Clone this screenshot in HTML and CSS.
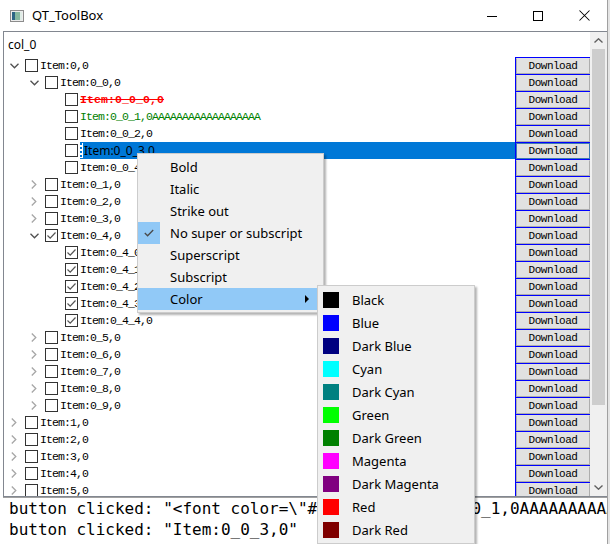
FILE: index.html
```html
<!DOCTYPE html>
<html>
<head>
<meta charset="utf-8">
<link rel="stylesheet" href="styles.css">
</head>
<body>
<div class="window">
  <div class="titlebar">
    <svg class="app-icon" width="14" height="12" viewBox="0 0 14 12"><rect x="0.5" y="0.5" width="13" height="11" fill="#ececec" stroke="#8c8c8c"/><rect x="2" y="2" width="3" height="8" fill="#2c6585"/><rect x="5" y="2" width="5" height="8" fill="#86b8a0"/><rect x="10" y="2" width="2" height="8" fill="#dfece6"/></svg>
    <span class="title">QT_ToolBox</span>
    <div class="controls">
      <div class="ctl"><svg width="10" height="10" viewBox="0 0 10 10"><line x1="0" y1="5.5" x2="10" y2="5.5" stroke="#000" stroke-width="1"/></svg></div>
      <div class="ctl"><svg width="10" height="10" viewBox="0 0 10 10"><rect x="0.5" y="0.5" width="9" height="9" fill="none" stroke="#000" stroke-width="1"/></svg></div>
      <div class="ctl"><svg width="11" height="11" viewBox="0 0 11 11"><path d="M0.5 0.5 L10.5 10.5 M10.5 0.5 L0.5 10.5" stroke="#000" stroke-width="1.05" fill="none"/></svg></div>
    </div>
  </div>
  <div class="client">
    <div class="tree">
      <div class="viewport">
        <div class="header">col_0</div>
        <div class="rows">
          <div class="row"><div class="node l0"><span class="arr"><svg width="9" height="6" viewBox="0 0 9 6"><polyline points="0.5,0.8 4.5,4.8 8.5,0.8" fill="none" stroke="#505050" stroke-width="1.3"/></svg></span><span class="cb"></span><span class="lbl">Item:0,0</span></div><div class="dl"><div class="dl-btn">Download</div></div></div>
          <div class="row"><div class="node l1"><span class="arr"><svg width="9" height="6" viewBox="0 0 9 6"><polyline points="0.5,0.8 4.5,4.8 8.5,0.8" fill="none" stroke="#505050" stroke-width="1.3"/></svg></span><span class="cb"></span><span class="lbl">Item:0_0,0</span></div><div class="dl"><div class="dl-btn">Download</div></div></div>
          <div class="row"><div class="node l2"><span class="arr"></span><span class="cb"></span><span class="lbl red">Item:0_0_0,0</span></div><div class="dl"><div class="dl-btn">Download</div></div></div>
          <div class="row"><div class="node l2"><span class="arr"></span><span class="cb"></span><span class="lbl green">Item:0_0_1,0AAAAAAAAAAAAAAAAAA</span></div><div class="dl"><div class="dl-btn">Download</div></div></div>
          <div class="row"><div class="node l2"><span class="arr"></span><span class="cb"></span><span class="lbl">Item:0_0_2,0</span></div><div class="dl"><div class="dl-btn">Download</div></div></div>
          <div class="row"><div class="node l2"><span class="arr"></span><span class="cb"></span><div class="edit"><span class="caret"></span><span class="edit-text">Item:0_0_3,0</span></div></div><div class="dl sel"><div class="dl-btn">Download</div></div></div>
          <div class="row"><div class="node l2"><span class="arr"></span><span class="cb"></span><span class="lbl">Item:0_0_4,0</span></div><div class="dl"><div class="dl-btn">Download</div></div></div>
          <div class="row"><div class="node l1"><span class="arr"><svg width="6" height="9" viewBox="0 0 6 9"><polyline points="0.8,0.5 4.8,4.5 0.8,8.5" fill="none" stroke="#a6a6a6" stroke-width="1.3"/></svg></span><span class="cb"></span><span class="lbl">Item:0_1,0</span></div><div class="dl"><div class="dl-btn">Download</div></div></div>
          <div class="row"><div class="node l1"><span class="arr"><svg width="6" height="9" viewBox="0 0 6 9"><polyline points="0.8,0.5 4.8,4.5 0.8,8.5" fill="none" stroke="#a6a6a6" stroke-width="1.3"/></svg></span><span class="cb"></span><span class="lbl">Item:0_2,0</span></div><div class="dl"><div class="dl-btn">Download</div></div></div>
          <div class="row"><div class="node l1"><span class="arr"><svg width="6" height="9" viewBox="0 0 6 9"><polyline points="0.8,0.5 4.8,4.5 0.8,8.5" fill="none" stroke="#a6a6a6" stroke-width="1.3"/></svg></span><span class="cb"></span><span class="lbl">Item:0_3,0</span></div><div class="dl"><div class="dl-btn">Download</div></div></div>
          <div class="row"><div class="node l1"><span class="arr"><svg width="9" height="6" viewBox="0 0 9 6"><polyline points="0.5,0.8 4.5,4.8 8.5,0.8" fill="none" stroke="#505050" stroke-width="1.3"/></svg></span><span class="cb"><svg width="11" height="11" viewBox="0 0 11 11"><polyline points="1.5,5.5 4.2,8.2 9.5,2.5" fill="none" stroke="#555" stroke-width="1.2"/></svg></span><span class="lbl">Item:0_4,0</span></div><div class="dl"><div class="dl-btn">Download</div></div></div>
          <div class="row"><div class="node l2"><span class="arr"></span><span class="cb"><svg width="11" height="11" viewBox="0 0 11 11"><polyline points="1.5,5.5 4.2,8.2 9.5,2.5" fill="none" stroke="#555" stroke-width="1.2"/></svg></span><span class="lbl">Item:0_4_0,0</span></div><div class="dl"><div class="dl-btn">Download</div></div></div>
          <div class="row"><div class="node l2"><span class="arr"></span><span class="cb"><svg width="11" height="11" viewBox="0 0 11 11"><polyline points="1.5,5.5 4.2,8.2 9.5,2.5" fill="none" stroke="#555" stroke-width="1.2"/></svg></span><span class="lbl">Item:0_4_1,0</span></div><div class="dl"><div class="dl-btn">Download</div></div></div>
          <div class="row"><div class="node l2"><span class="arr"></span><span class="cb"><svg width="11" height="11" viewBox="0 0 11 11"><polyline points="1.5,5.5 4.2,8.2 9.5,2.5" fill="none" stroke="#555" stroke-width="1.2"/></svg></span><span class="lbl">Item:0_4_2,0</span></div><div class="dl"><div class="dl-btn">Download</div></div></div>
          <div class="row"><div class="node l2"><span class="arr"></span><span class="cb"><svg width="11" height="11" viewBox="0 0 11 11"><polyline points="1.5,5.5 4.2,8.2 9.5,2.5" fill="none" stroke="#555" stroke-width="1.2"/></svg></span><span class="lbl">Item:0_4_3,0</span></div><div class="dl"><div class="dl-btn">Download</div></div></div>
          <div class="row"><div class="node l2"><span class="arr"></span><span class="cb"><svg width="11" height="11" viewBox="0 0 11 11"><polyline points="1.5,5.5 4.2,8.2 9.5,2.5" fill="none" stroke="#555" stroke-width="1.2"/></svg></span><span class="lbl">Item:0_4_4,0</span></div><div class="dl"><div class="dl-btn">Download</div></div></div>
          <div class="row"><div class="node l1"><span class="arr"><svg width="6" height="9" viewBox="0 0 6 9"><polyline points="0.8,0.5 4.8,4.5 0.8,8.5" fill="none" stroke="#a6a6a6" stroke-width="1.3"/></svg></span><span class="cb"></span><span class="lbl">Item:0_5,0</span></div><div class="dl"><div class="dl-btn">Download</div></div></div>
          <div class="row"><div class="node l1"><span class="arr"><svg width="6" height="9" viewBox="0 0 6 9"><polyline points="0.8,0.5 4.8,4.5 0.8,8.5" fill="none" stroke="#a6a6a6" stroke-width="1.3"/></svg></span><span class="cb"></span><span class="lbl">Item:0_6,0</span></div><div class="dl"><div class="dl-btn">Download</div></div></div>
          <div class="row"><div class="node l1"><span class="arr"><svg width="6" height="9" viewBox="0 0 6 9"><polyline points="0.8,0.5 4.8,4.5 0.8,8.5" fill="none" stroke="#a6a6a6" stroke-width="1.3"/></svg></span><span class="cb"></span><span class="lbl">Item:0_7,0</span></div><div class="dl"><div class="dl-btn">Download</div></div></div>
          <div class="row"><div class="node l1"><span class="arr"><svg width="6" height="9" viewBox="0 0 6 9"><polyline points="0.8,0.5 4.8,4.5 0.8,8.5" fill="none" stroke="#a6a6a6" stroke-width="1.3"/></svg></span><span class="cb"></span><span class="lbl">Item:0_8,0</span></div><div class="dl"><div class="dl-btn">Download</div></div></div>
          <div class="row"><div class="node l1"><span class="arr"><svg width="6" height="9" viewBox="0 0 6 9"><polyline points="0.8,0.5 4.8,4.5 0.8,8.5" fill="none" stroke="#a6a6a6" stroke-width="1.3"/></svg></span><span class="cb"></span><span class="lbl">Item:0_9,0</span></div><div class="dl"><div class="dl-btn">Download</div></div></div>
          <div class="row"><div class="node l0"><span class="arr"><svg width="6" height="9" viewBox="0 0 6 9"><polyline points="0.8,0.5 4.8,4.5 0.8,8.5" fill="none" stroke="#a6a6a6" stroke-width="1.3"/></svg></span><span class="cb"></span><span class="lbl">Item:1,0</span></div><div class="dl"><div class="dl-btn">Download</div></div></div>
          <div class="row"><div class="node l0"><span class="arr"><svg width="6" height="9" viewBox="0 0 6 9"><polyline points="0.8,0.5 4.8,4.5 0.8,8.5" fill="none" stroke="#a6a6a6" stroke-width="1.3"/></svg></span><span class="cb"></span><span class="lbl">Item:2,0</span></div><div class="dl"><div class="dl-btn">Download</div></div></div>
          <div class="row"><div class="node l0"><span class="arr"><svg width="6" height="9" viewBox="0 0 6 9"><polyline points="0.8,0.5 4.8,4.5 0.8,8.5" fill="none" stroke="#a6a6a6" stroke-width="1.3"/></svg></span><span class="cb"></span><span class="lbl">Item:3,0</span></div><div class="dl"><div class="dl-btn">Download</div></div></div>
          <div class="row"><div class="node l0"><span class="arr"><svg width="6" height="9" viewBox="0 0 6 9"><polyline points="0.8,0.5 4.8,4.5 0.8,8.5" fill="none" stroke="#a6a6a6" stroke-width="1.3"/></svg></span><span class="cb"></span><span class="lbl">Item:4,0</span></div><div class="dl"><div class="dl-btn">Download</div></div></div>
          <div class="row"><div class="node l0"><span class="arr"><svg width="6" height="9" viewBox="0 0 6 9"><polyline points="0.8,0.5 4.8,4.5 0.8,8.5" fill="none" stroke="#a6a6a6" stroke-width="1.3"/></svg></span><span class="cb"></span><span class="lbl">Item:5,0</span></div><div class="dl"><div class="dl-btn">Download</div></div></div>
        </div>
      </div>
      <div class="vscroll">
        <div class="sb-btn"><svg width="9" height="5" viewBox="0 0 9 5"><polyline points="0.5,4.5 4.5,0.8 8.5,4.5" fill="none" stroke="#606060" stroke-width="1.4"/></svg></div>
        <div class="thumb"></div>
        <div class="sb-track"></div>
        <div class="sb-btn"><svg width="9" height="5" viewBox="0 0 9 5"><polyline points="0.5,0.5 4.5,4.2 8.5,0.5" fill="none" stroke="#606060" stroke-width="1.4"/></svg></div>
      </div>
    </div>
    <div class="log">
      <div class="log-line">button clicked: "&lt;font color=\"#008000\"&gt;Item:0_0_1,0AAAAAAAAAAAAAAAAAA&lt;/font&gt;"</div>
      <div class="log-line">button clicked: "Item:0_0_3,0"</div>
    </div>
  </div>
</div>

<div class="ctx">
  <div class="mi"><span class="ico"></span><span>Bold</span></div>
  <div class="mi"><span class="ico"></span><span>Italic</span></div>
  <div class="mi"><span class="ico"></span><span>Strike out</span></div>
  <div class="mi"><span class="ico checked"><svg width="10" height="8" viewBox="0 0 10 8"><polyline points="0.8,4 3.6,6.8 9.2,1" fill="none" stroke="#4a4a4a" stroke-width="1.3"/></svg></span><span>No super or subscript</span></div>
  <div class="mi"><span class="ico"></span><span>Superscript</span></div>
  <div class="mi"><span class="ico"></span><span>Subscript</span></div>
  <div class="mi hl"><span class="ico"></span><span>Color</span><span class="tri"></span></div>
</div>

<div class="sub">
  <div class="si"><span class="sw" style="background:#000000"></span><span>Black</span></div>
  <div class="si"><span class="sw" style="background:#0000ff"></span><span>Blue</span></div>
  <div class="si"><span class="sw" style="background:#000080"></span><span>Dark Blue</span></div>
  <div class="si"><span class="sw" style="background:#00ffff"></span><span>Cyan</span></div>
  <div class="si"><span class="sw" style="background:#008080"></span><span>Dark Cyan</span></div>
  <div class="si"><span class="sw" style="background:#00ff00"></span><span>Green</span></div>
  <div class="si"><span class="sw" style="background:#008000"></span><span>Dark Green</span></div>
  <div class="si"><span class="sw" style="background:#ff00ff"></span><span>Magenta</span></div>
  <div class="si"><span class="sw" style="background:#800080"></span><span>Dark Magenta</span></div>
  <div class="si"><span class="sw" style="background:#ff0000"></span><span>Red</span></div>
  <div class="si"><span class="sw" style="background:#800000"></span><span>Dark Red</span></div>
</div>
</body>
</html>
```

FILE: styles.css
```css
* { box-sizing: border-box; }
html, body { margin: 0; padding: 0; }
body {
  width: 610px;
  height: 544px;
  overflow: hidden;
  position: relative;
  background: #e4e4e4;
  font-family: "Noto Sans", sans-serif;
  color: #000;
}
.window {
  width: 608px;
  height: 544px;
  background: #fff;
  border-right: 1px solid #a0a0a0;
  display: flex;
  flex-direction: column;
}
.titlebar {
  height: 31px;
  flex-shrink: 0;
  display: flex;
  align-items: center;
}
.app-icon { margin-left: 10px; display: block; }
.title { margin-left: 8px; font-size: 13px; line-height: 31px; }
.controls { margin-left: auto; display: flex; height: 31px; }
.ctl { width: 46px; height: 31px; display: flex; align-items: center; justify-content: center; }
.ctl svg { display: block; }

.client {
  flex: 1;
  display: flex;
  flex-direction: column;
  padding-left: 3px;
  min-height: 0;
}
.tree {
  height: 466px;
  flex-shrink: 0;
  border: 1px solid #828790;
  border-right: none;
  display: flex;
}
.viewport {
  flex: 1;
  min-width: 0;
  display: flex;
  flex-direction: column;
  overflow: hidden;
}
.header {
  height: 25px;
  flex-shrink: 0;
  padding-left: 4px;
  font-size: 12px;
  line-height: 25px;
}
.rows { display: flex; flex-direction: column; }
.row { height: 17px; flex-shrink: 0; display: flex; }
.node {
  flex: 1;
  min-width: 0;
  display: flex;
  align-items: center;
  overflow: hidden;
}
.l1 { padding-left: 20px; }
.l2 { padding-left: 40px; }
.arr {
  width: 20px;
  height: 17px;
  flex-shrink: 0;
  display: flex;
  align-items: center;
  justify-content: center;
}
.arr svg { display: block; }
.cb {
  width: 13px;
  height: 13px;
  flex-shrink: 0;
  margin-left: 1px;
  margin-right: 2px;
  border: 1px solid #333;
  background: #fff;
  display: flex;
}
.cb svg { display: block; }
.lbl {
  font-family: "Liberation Mono", monospace;
  font-size: 11.5px;
  letter-spacing: -0.9px;
  line-height: 17px;
  white-space: nowrap;
}
.lbl.red {
  color: #ff0000;
  font-weight: bold;
  letter-spacing: 0.1px;
  text-decoration: line-through;
}
.lbl.green { color: #008000; }
.edit {
  flex: 1;
  height: 17px;
  display: flex;
  align-items: center;
  background: #0078d7;
}
.caret {
  width: 3px;
  height: 15px;
  background: repeating-linear-gradient(#0078d7 0 2px, #ffffff 2px 4px);
  border-right: 1px solid #fff;
  flex-shrink: 0;
}
.edit-text { font-size: 12px; padding-left: 1px; white-space: nowrap; }
.dl {
  width: 75px;
  height: 17px;
  flex-shrink: 0;
  border-top: 1px solid #0000ff;
  border-left: 1px solid #0000ff;
}
.dl-btn {
  height: 100%;
  background: #e1e1e1;
  border: 1px solid #adadad;
  border-top-color: #e1e1e1;
  display: flex;
  align-items: center;
  justify-content: center;
  font-family: "Liberation Mono", monospace;
  font-size: 11px;
  letter-spacing: -0.5px;
}
.dl.sel .dl-btn { border-color: #3d7ab0; }

.vscroll {
  width: 17px;
  flex-shrink: 0;
  background: #f0f0f0;
  display: flex;
  flex-direction: column;
}
.sb-btn { height: 17px; flex-shrink: 0; display: flex; align-items: center; justify-content: center; }
.sb-btn svg { display: block; }
.thumb { height: 356px; margin: 0 2px; background: #cdcdcd; flex-shrink: 0; }
.sb-track { flex: 1; }

.log {
  flex: 1;
  border-top: 1px solid #a0a0a0;
  padding-left: 6px;
  overflow: hidden;
  font-family: "DejaVu Sans Mono", monospace;
  font-size: 16px;
  line-height: 21px;
  white-space: nowrap;
}

.ctx {
  position: absolute;
  left: 137px;
  top: 153px;
  width: 187px;
  background: #f0f0f0;
  border: 1px solid #cccccc;
  padding: 2px 0;
  box-shadow: 2px 2px 2px rgba(0, 0, 0, 0.3);
}
.mi {
  height: 22px;
  display: flex;
  align-items: center;
  font-size: 13px;
  white-space: nowrap;
}
.mi.hl { background: #91c9f7; }
.ico {
  width: 22px;
  height: 22px;
  margin-right: 10px;
  flex-shrink: 0;
  display: flex;
  align-items: center;
  justify-content: center;
}
.ico.checked { background: #90c8f6; }
.ico svg { display: block; }
.tri {
  margin-left: auto;
  margin-right: 14px;
  width: 0;
  height: 0;
  border-top: 4px solid transparent;
  border-bottom: 4px solid transparent;
  border-left: 4px solid #000;
}

.sub {
  position: absolute;
  left: 317px;
  top: 285px;
  width: 158px;
  background: #f0f0f0;
  border: 1px solid #cccccc;
  padding: 2px 0;
  box-shadow: 2px 2px 2px rgba(0, 0, 0, 0.3);
}
.si {
  height: 23px;
  display: flex;
  align-items: center;
  padding-left: 5px;
  font-size: 13px;
  white-space: nowrap;
}
.sw { width: 16px; height: 16px; margin-right: 13px; flex-shrink: 0; }
```
